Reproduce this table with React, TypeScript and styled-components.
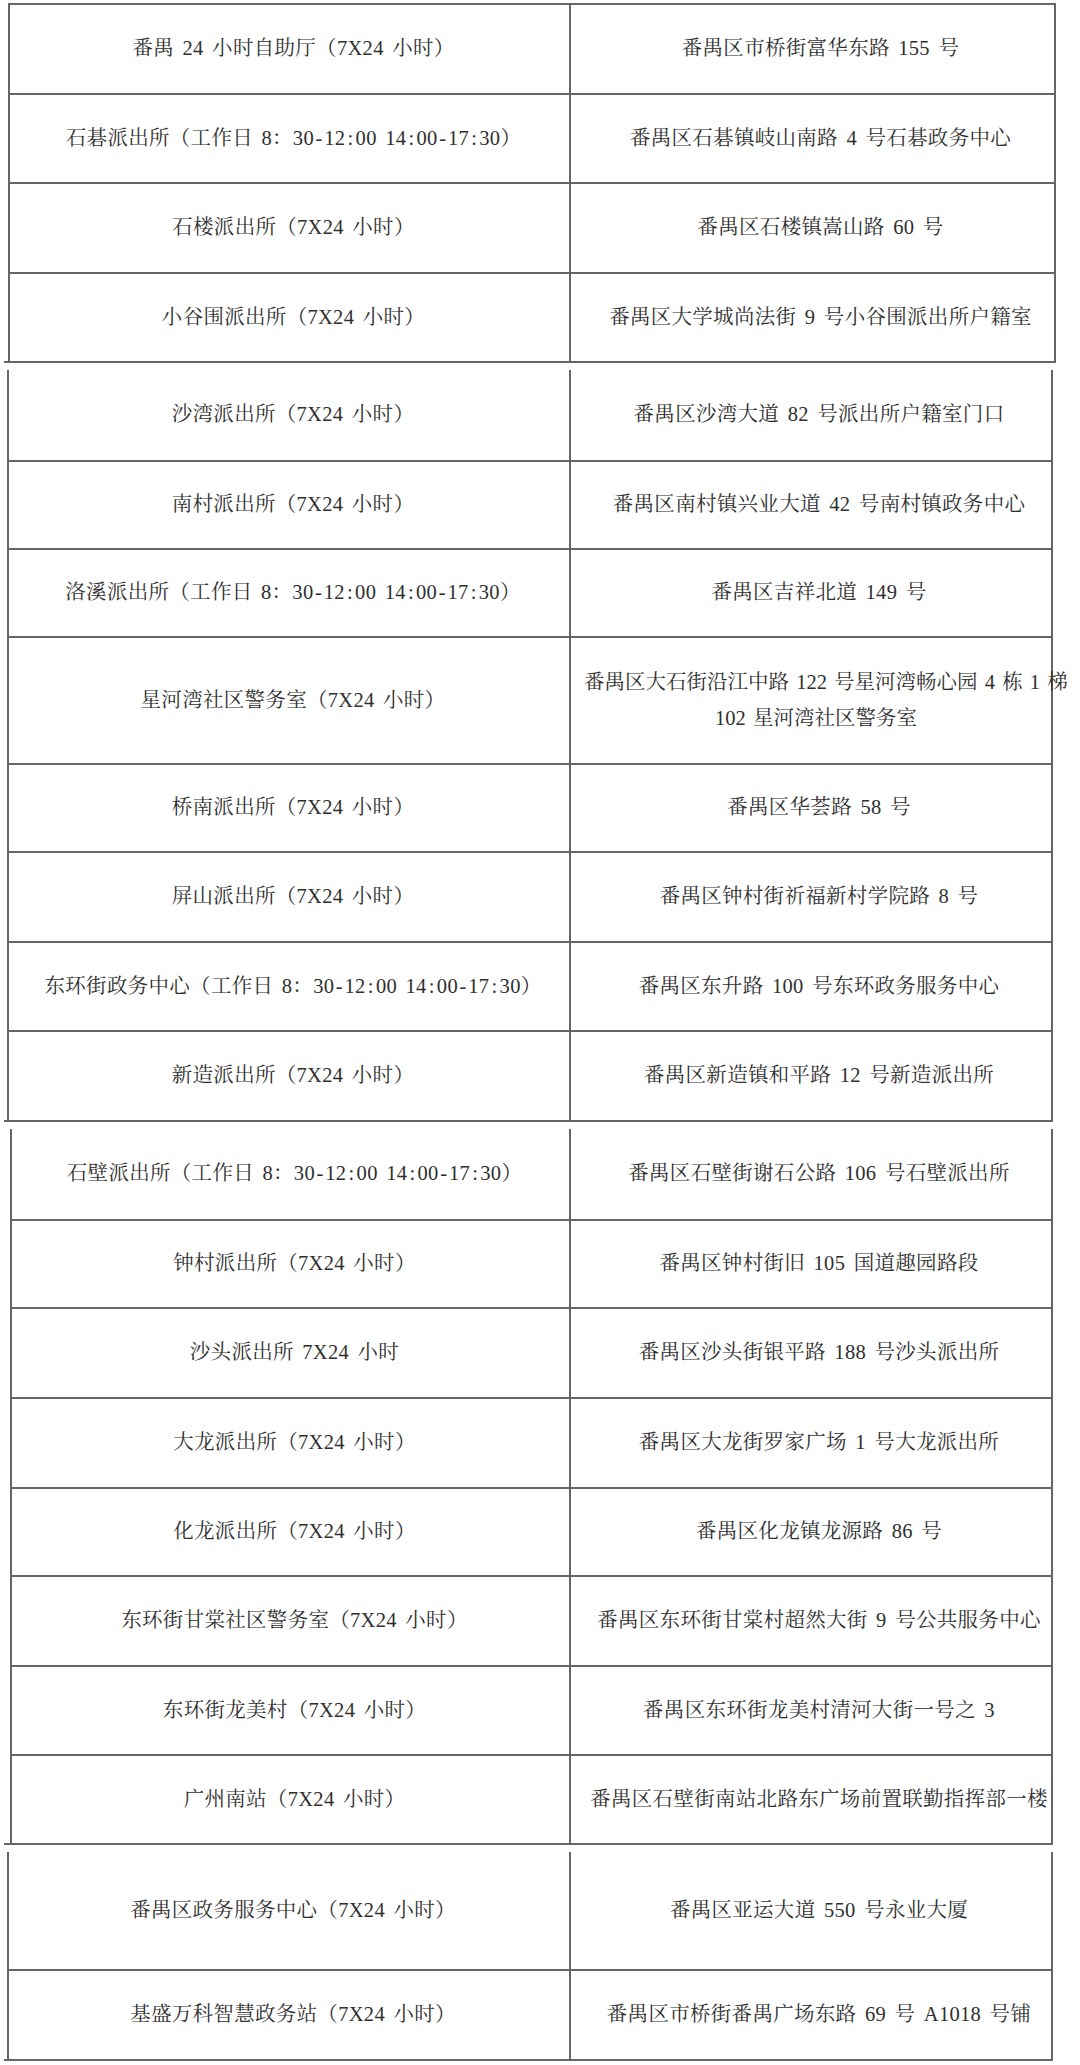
import React from "react";
import styled, { createGlobalStyle } from "styled-components";

const Global = createGlobalStyle`
  html, body { margin: 0; padding: 0; background: #ffffff; }
  body {
    font-family: "Liberation Serif", "Noto Serif CJK SC", "Noto Sans CJK SC", serif;
    color: #2f2f2f;
  }
  * { box-sizing: border-box; }
`;

const LINE = "#666666";
const MID = 571;

const Page = styled.main`
  width: 1080px;
  height: 2065px;
  padding-top: 3px;
  display: flex;
  flex-direction: column;
  background: #fff;
  overflow: hidden;
`;

const Segment = styled.section<{ $left: number; $right: number; $gap: number }>`
  margin: ${(p) => p.$gap}px 0 0 4px;
  width: ${(p) => p.$right - 4}px;
  padding-left: ${(p) => p.$left - 4}px;
  border-bottom: 2px solid ${LINE};
`;

const Table = styled.div<{ $top: boolean }>`
  display: flex;
  flex-direction: column;
  border-left: 2px solid ${LINE};
  border-right: 2px solid ${LINE};
  border-top: ${(p) => (p.$top ? `2px solid ${LINE}` : "none")};
`;

const Row = styled.div<{ $h: number; $first: boolean; $leftW: number }>`
  display: grid;
  grid-template-columns: ${(p) => p.$leftW}px 1fr;
  height: ${(p) => p.$h}px;
  border-top: ${(p) => (p.$first ? "none" : `2px solid ${LINE}`)};
`;

const Cell = styled.div<{ $side: "left" | "right" }>`
  display: flex;
  align-items: center;
  justify-content: center;
  min-width: 0;
  text-align: center;
  font-size: 20.5px;
  line-height: 36px;
  letter-spacing: 0.3px;
  word-spacing: 0.15em;
  white-space: nowrap;
  padding: ${(p) => (p.$side === "left" ? "0 0 2px 8px" : "0 0 2px 16px")};
  border-right: ${(p) => (p.$side === "left" ? `2px solid ${LINE}` : "none")};
`;

const Lines = styled.div`
  width: 100%;
  margin-left: -6px;
  text-align: center;
  letter-spacing: 0;
  word-spacing: 0.1em;
`;

const Sym = styled.span`
  display: inline-block;
  width: 0.5em;
  text-align: center;
`;

/* time ranges: give ':' and '-' the half-width cell of the reference face */
function Time({ text }: { text: string }) {
  const parts = text.split(/([:\-])/);
  return (
    <>
      {parts.map((p, i) =>
        p === ":" || p === "-" ? <Sym key={i}>{p}</Sym> : <React.Fragment key={i}>{p}</React.Fragment>
      )}
    </>
  );
}

const WORK = (place: string) => (
  <>
    {place}（工作日 8：<Time text="30-12:00" /> <Time text="14:00-17:30" />）
  </>
);

type Item = { name: React.ReactNode; addr: React.ReactNode; h: number };
type Seg = { left: number; right: number; gap: number; top: boolean; items: Item[] };

const segments: Seg[] = [
  {
    left: 8,
    right: 1056,
    gap: 0,
    top: true,
    items: [
      { name: "番禺 24 小时自助厅（7X24 小时）", addr: "番禺区市桥街富华东路 155 号", h: 88 },
      { name: WORK("石碁派出所"), addr: "番禺区石碁镇岐山南路 4 号石碁政务中心", h: 89 },
      { name: "石楼派出所（7X24 小时）", addr: "番禺区石楼镇嵩山路 60 号", h: 90 },
      { name: "小谷围派出所（7X24 小时）", addr: "番禺区大学城尚法街 9 号小谷围派出所户籍室", h: 89 },
    ],
  },
  {
    left: 7,
    right: 1053,
    gap: 7,
    top: false,
    items: [
      { name: "沙湾派出所（7X24 小时）", addr: "番禺区沙湾大道 82 号派出所户籍室门口", h: 90 },
      { name: "南村派出所（7X24 小时）", addr: "番禺区南村镇兴业大道 42 号南村镇政务中心", h: 88 },
      { name: WORK("洛溪派出所"), addr: "番禺区吉祥北道 149 号", h: 88 },
      {
        name: "星河湾社区警务室（7X24 小时）",
        addr: (
          <Lines>
            番禺区大石街沿江中路 122 号星河湾畅心园 4 栋 1 梯
            <br />
            102 星河湾社区警务室
          </Lines>
        ),
        h: 127,
      },
      { name: "桥南派出所（7X24 小时）", addr: "番禺区华荟路 58 号", h: 88 },
      { name: "屏山派出所（7X24 小时）", addr: "番禺区钟村街祈福新村学院路 8 号", h: 90 },
      { name: WORK("东环街政务中心"), addr: "番禺区东升路 100 号东环政务服务中心", h: 89 },
      { name: "新造派出所（7X24 小时）", addr: "番禺区新造镇和平路 12 号新造派出所", h: 90 },
    ],
  },
  {
    left: 10,
    right: 1053,
    gap: 7,
    top: false,
    items: [
      { name: WORK("石壁派出所"), addr: "番禺区石壁街谢石公路 106 号石壁派出所", h: 90 },
      { name: "钟村派出所（7X24 小时）", addr: "番禺区钟村街旧 105 国道趣园路段", h: 88 },
      { name: "沙头派出所 7X24 小时", addr: "番禺区沙头街银平路 188 号沙头派出所", h: 90 },
      { name: "大龙派出所（7X24 小时）", addr: "番禺区大龙街罗家广场 1 号大龙派出所", h: 90 },
      { name: "化龙派出所（7X24 小时）", addr: "番禺区化龙镇龙源路 86 号", h: 88 },
      { name: "东环街甘棠社区警务室（7X24 小时）", addr: "番禺区东环街甘棠村超然大街 9 号公共服务中心", h: 90 },
      { name: "东环街龙美村（7X24 小时）", addr: "番禺区东环街龙美村清河大街一号之 3", h: 89 },
      { name: "广州南站（7X24 小时）", addr: "番禺区石壁街南站北路东广场前置联勤指挥部一楼", h: 89 },
    ],
  },
  {
    left: 7,
    right: 1053,
    gap: 7,
    top: false,
    items: [
      { name: "番禺区政务服务中心（7X24 小时）", addr: "番禺区亚运大道 550 号永业大厦", h: 117 },
      { name: "基盛万科智慧政务站（7X24 小时）", addr: "番禺区市桥街番禺广场东路 69 号 A1018 号铺", h: 90 },
    ],
  },
];

export default function App() {
  return (
    <>
      <Global />
      <Page>
        {segments.map((seg, si) => {
          const leftW = MID - seg.left - 2;
          return (
            <Segment key={si} $left={seg.left} $right={seg.right} $gap={seg.gap}>
              <Table $top={seg.top}>
                {seg.items.map((it, i) => (
                  <Row key={i} $h={it.h} $first={i === 0} $leftW={leftW}>
                    <Cell $side="left">{it.name}</Cell>
                    <Cell $side="right">{it.addr}</Cell>
                  </Row>
                ))}
              </Table>
            </Segment>
          );
        })}
      </Page>
    </>
  );
}
